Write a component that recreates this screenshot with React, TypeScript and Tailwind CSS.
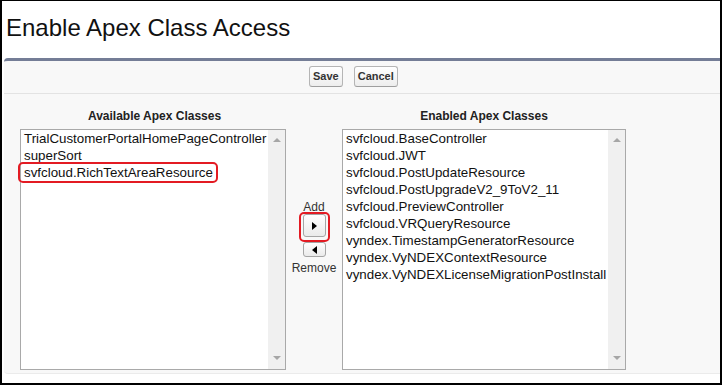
import React from "react";

const FONT = { fontFamily: '"Liberation Sans", Arial, sans-serif' };

function ScrollBar() {
  return (
    <div className="w-[17px] shrink-0 bg-[#f0f0f0] flex flex-col justify-between items-center pt-[8px] pb-[9px]">
      <div className="w-0 h-0 border-l-[4px] border-r-[4px] border-b-[4px] border-l-transparent border-r-transparent border-b-[#a6a6a6]" />
      <div className="w-0 h-0 border-l-[4px] border-r-[4px] border-t-[4px] border-l-transparent border-r-transparent border-t-[#a6a6a6]" />
    </div>
  );
}

function ListBox({ width, items, highlight }: { width: string; items: string[]; highlight?: number }) {
  return (
    <div className={`${width} h-[241px] border border-[#a9a9a9] bg-white flex shrink-0`}>
      <div className="flex-1 pl-[3px] text-[13.33px] leading-[17px] text-[#111]">
        {items.map((it, i) => (
          <div key={it} className="whitespace-nowrap">
            {i === highlight ? (
              <span className="relative inline-block">
                {it}
                <span className="absolute left-[-6px] right-[-5px] top-[-2px] bottom-[-2px] border-2 border-[#e31b23] rounded-[5px]" />
              </span>
            ) : (
              it
            )}
          </div>
        ))}
      </div>
      <ScrollBar />
    </div>
  );
}

function Btn({ children }: { children: React.ReactNode }) {
  return (
    <button className="h-[21px] px-[3px] border border-[#b5b5b5] border-b-[#9e9e9e] rounded-[3px] bg-gradient-to-b from-white to-[#ededed] text-[11px] leading-[13px] font-bold text-[#333]">
      {children}
    </button>
  );
}

export default function App() {
  const left = ["TrialCustomerPortalHomePageController", "superSort", "svfcloud.RichTextAreaResource"];
  const right = [
    "svfcloud.BaseController",
    "svfcloud.JWT",
    "svfcloud.PostUpdateResource",
    "svfcloud.PostUpgradeV2_9ToV2_11",
    "svfcloud.PreviewController",
    "svfcloud.VRQueryResource",
    "vyndex.TimestampGeneratorResource",
    "vyndex.VyNDEXContextResource",
    "vyndex.VyNDEXLicenseMigrationPostInstall",
  ];
  return (
    <div
      style={FONT}
      className="w-[722px] h-[385px] bg-white border-t border-l-2 border-r-2 border-b-2 border-black overflow-hidden flex flex-col"
    >
      <div className="pt-[13px] pl-[4px] text-[24px] leading-[28px] text-[#111]">Enable Apex Class Access</div>
      <div className="mt-[16px] ml-[2px] bg-[#f8f8f8] border-t-[3px] border-[#747d96] rounded-tl-[4px] rounded-bl-[4px] border-b border-b-[#ebebeb] pb-[3px]">
        <div className="flex gap-[11px] pl-[305px] pt-[5px] pb-[6px] border-b border-[#e3e3e3]">
          <Btn>Save</Btn>
          <Btn>Cancel</Btn>
        </div>
        <div className="flex pl-[16px] pt-[15px]">
          <div className="flex flex-col items-center">
            <div className="h-[14px] text-[12px] leading-[14px] font-bold text-[#222] mb-[6px] pl-[3px]">Available Apex Classes</div>
            <ListBox width="w-[266px]" items={left} highlight={2} />
          </div>
          <div className="w-[56px] flex flex-col items-center pt-[91px] text-[12px] leading-[14px] text-[#333]">
            <div>Add</div>
            <div className="relative mt-[0px]">
              <div className="w-[23px] h-[23px] border border-[#a5a5a5] rounded-[3px] bg-gradient-to-b from-white to-[#eaeaea] flex items-center justify-center">
                <div className="w-0 h-0 border-t-[4px] border-b-[4px] border-l-[5px] border-t-transparent border-b-transparent border-l-black" />
              </div>
              <span className="absolute left-[-4px] right-[-4px] top-[-2px] bottom-[-5px] border-2 border-[#e31b23] rounded-[5px]" />
            </div>
            <div className="mt-[5px] w-[23px] h-[15px] border border-[#a5a5a5] rounded-[3px] bg-gradient-to-b from-white to-[#eaeaea] flex items-center justify-center">
              <div className="w-0 h-0 border-t-[4px] border-b-[4px] border-r-[5px] border-t-transparent border-b-transparent border-r-black" />
            </div>
            <div className="mt-[4px]">Remove</div>
          </div>
          <div className="flex flex-col items-center">
            <div className="h-[14px] text-[12px] leading-[14px] font-bold text-[#222] mb-[6px]">Enabled Apex Classes</div>
            <ListBox width="w-[284px]" items={right} />
          </div>
        </div>
      </div>
    </div>
  );
}
